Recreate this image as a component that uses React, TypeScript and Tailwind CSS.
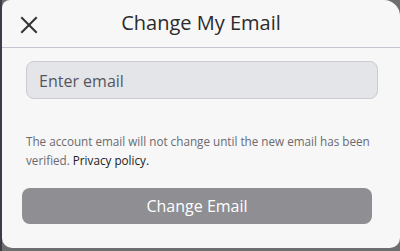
import React, { useState } from "react";

function CloseIcon() {
    return (
        <svg width="18" height="18" viewBox="0 0 18 18" fill="none" stroke="#333333" strokeWidth="2" strokeLinecap="square">
            <path d="M2 2 L16 16" />
            <path d="M16 2 L2 16" />
        </svg>
    );
}

export default function App() {
    const [email, setEmail] = useState("");

    return (
        <div className="w-[400px] h-[251px] bg-[#6e6e70] overflow-hidden flex" style={{ fontFamily: "'Open Sans', 'Noto Sans', sans-serif" }}>
            <div className="w-[2px] h-full bg-[#3a3d48]" />
            <div className="flex-1 h-[248px] bg-[#f7f7f7] rounded-tl-[8px] rounded-tr-[16px] rounded-b-[10px] flex flex-col">
                {/* header */}
                <div className="relative h-[48px] border-b border-[#c4c4d2] flex items-center justify-center">
                    <button type="button" className="absolute left-[18px] top-[16px]">
                        <CloseIcon />
                    </button>
                    <h2 className="text-[20px] text-[#2b2b2e] leading-none pb-[1px]">Change My Email</h2>
                </div>

                <div className="pl-[24px] pr-[22px] pt-[13px]">
                    <input
                        type="email"
                        value={email}
                        onChange={(e) => setEmail(e.target.value)}
                        placeholder="Enter email"
                        className="block w-full h-[38px] rounded-[8px] bg-[#e4e5e9] border border-[#c9cad3] px-[12px] pt-[2px] text-[16px] text-[#333] placeholder:text-[#55555f] outline-none"
                    />
                </div>

                {/* notice, lines split by hand */}
                <div className="pl-[24px] pr-[18px] mt-[33px] text-[11.7px] leading-[19px] text-[#6a6a70]">
                    <p>The account email will not change until the new email has been</p>
                    <p className="flex gap-[3px]">
                        <span>verified.</span>
                        <span className="font-medium text-[#222]">Privacy policy.</span>
                    </p>
                </div>

                <div className="pl-[20px] pr-[28px] mt-[18px]">
                    <button type="button" className="w-full h-[36px] rounded-[8px] bg-[#8e8e93] text-white text-[16px]">
                        Change Email
                    </button>
                </div>
            </div>
        </div>
    );
}
